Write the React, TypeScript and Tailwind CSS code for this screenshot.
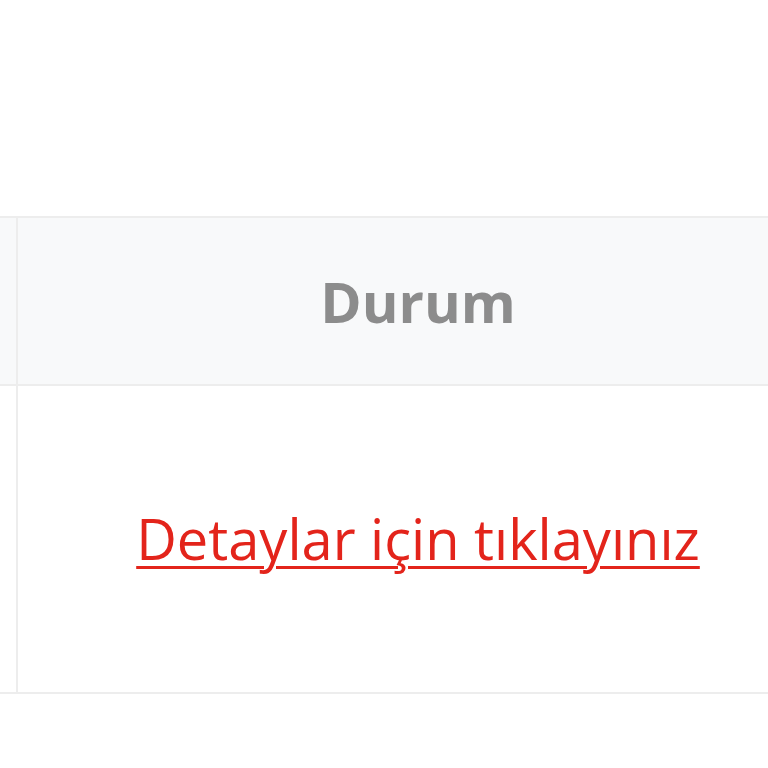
export default function App() {
  return (
    <div className="w-[768px] h-[768px] overflow-hidden bg-white pt-[216px] font-['Open_Sans',sans-serif]">
      <div className="w-[818px] border-y-2 border-[#ededed]">
        {/* başlık satırı */}
        <div className="flex h-[168px] bg-[#f8f9fa] border-b-2 border-[#ededed]">
          <div className="w-[18px] shrink-0 border-r-2 border-[#ededed]"></div>
          <div className="flex-1 flex items-center justify-center text-[56px] leading-[84px] font-bold text-[#8c8c8c]">
            Durum
          </div>
        </div>
        {/* içerik satırı */}
        <div className="flex h-[306px] bg-white">
          <div className="w-[18px] shrink-0 border-r-2 border-[#ededed]"></div>
          <div className="flex-1 flex items-center justify-center pb-[2px]">
            <a href="#" className="text-[56px] leading-[84px] text-[#e3241b] underline decoration-[3px] underline-offset-[6px]">
              Detaylar için tıklayınız
            </a>
          </div>
        </div>
      </div>
    </div>
  );
}
